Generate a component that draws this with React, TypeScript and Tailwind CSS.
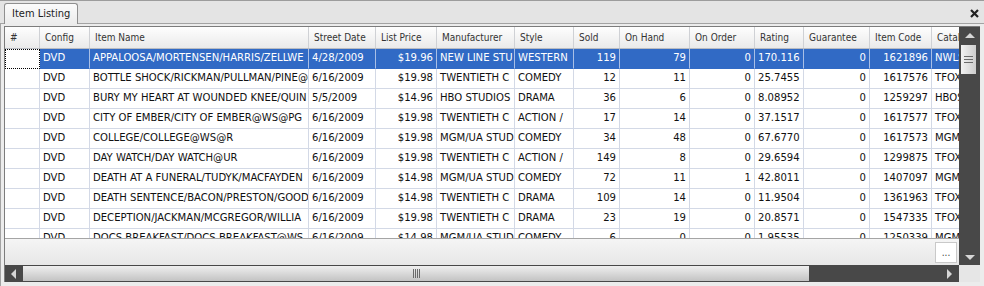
import React from 'react'

type Col = { title: string; w: number; right?: boolean }

const cols: Col[] = [
  { title: '#', w: 35 },
  { title: 'Config', w: 50 },
  { title: 'Item Name', w: 219 },
  { title: 'Street Date', w: 67 },
  { title: 'List Price', w: 61, right: true },
  { title: 'Manufacturer', w: 78 },
  { title: 'Style', w: 59 },
  { title: 'Sold', w: 46, right: true },
  { title: 'On Hand', w: 70, right: true },
  { title: 'On Order', w: 65, right: true },
  { title: 'Rating', w: 49 },
  { title: 'Guarantee', w: 66, right: true },
  { title: 'Item Code', w: 62, right: true },
  { title: 'Catalog', w: 60 },
]

// text is already cut the way the grid shows it
const rows: string[][] = [
  ['', 'DVD', 'APPALOOSA/MORTENSEN/HARRIS/ZELLWE', '4/28/2009', '$19.96', 'NEW LINE STU', 'WESTERN', '119', '79', '0', '170.116', '0', '1621896', 'NWLS'],
  ['', 'DVD', 'BOTTLE SHOCK/RICKMAN/PULLMAN/PINE@', '6/16/2009', '$19.98', 'TWENTIETH C', 'COMEDY', '12', '11', '0', '25.7455', '0', '1617576', 'TFOX'],
  ['', 'DVD', 'BURY MY HEART AT WOUNDED KNEE/QUIN', '5/5/2009', '$14.96', 'HBO STUDIOS', 'DRAMA', '36', '6', '0', '8.08952', '0', '1259297', 'HBOS'],
  ['', 'DVD', 'CITY OF EMBER/CITY OF EMBER@WS@PG', '6/16/2009', '$19.98', 'TWENTIETH C', 'ACTION /', '17', '14', '0', '37.1517', '0', '1617577', 'TFOX'],
  ['', 'DVD', 'COLLEGE/COLLEGE@WS@R', '6/16/2009', '$19.98', 'MGM/UA STUD', 'COMEDY', '34', '48', '0', '67.6770', '0', '1617573', 'MGM'],
  ['', 'DVD', 'DAY WATCH/DAY WATCH@UR', '6/16/2009', '$19.98', 'TWENTIETH C', 'ACTION /', '149', '8', '0', '29.6594', '0', '1299875', 'TFOX'],
  ['', 'DVD', 'DEATH AT A FUNERAL/TUDYK/MACFAYDEN', '6/16/2009', '$14.98', 'MGM/UA STUD', 'COMEDY', '72', '11', '1', '42.8011', '0', '1407097', 'MGM'],
  ['', 'DVD', 'DEATH SENTENCE/BACON/PRESTON/GOOD', '6/16/2009', '$14.98', 'TWENTIETH C', 'DRAMA', '109', '14', '0', '11.9504', '0', '1361963', 'TFOX'],
  ['', 'DVD', 'DECEPTION/JACKMAN/MCGREGOR/WILLIA', '6/16/2009', '$19.98', 'TWENTIETH C', 'DRAMA', '23', '19', '0', '20.8571', '0', '1547335', 'TFOX'],
  ['', 'DVD', 'DOCS BREAKFAST/DOCS BREAKFAST@WS', '6/16/2009', '$14.98', 'MGM/UA STUD', 'COMEDY', '6', '0', '0', '1.95535', '0', '1250339', 'MGM'],
]

const font = { fontFamily: '"DejaVu Sans Condensed", "DejaVu Sans", sans-serif', fontStretch: 'condensed' }

const HeaderRow = () => (
  <div className="flex h-[22px] shrink-0 border-b border-[#b9bcc2]">
    {cols.map((c) => (
      <div
        key={c.title}
        style={{ width: c.w }}
        className="shrink-0 flex items-center pl-[5px] overflow-hidden whitespace-nowrap border-r border-[#cfd1d5] bg-linear-to-b from-[#fefefe] to-[#eaeaea] text-[10px] text-[#333]"
      >
        {c.title}
      </div>
    ))}
  </div>
)

const DataRow = ({ row, selected }: { row: string[]; selected: boolean }) => (
  <div className="flex h-[20px] shrink-0">
    {cols.map((c, i) => {
      if (i === 0) {
        return (
          <div
            key={i}
            style={{ width: c.w }}
            className={
              selected
                ? 'shrink-0 bg-white border border-dotted border-black'
                : 'shrink-0 bg-white border-r border-b border-[#d3d9e6]'
            }
          />
        )
      }
      return (
        <div
          key={i}
          style={{ width: c.w }}
          className={
            'shrink-0 flex items-center overflow-hidden whitespace-nowrap px-[3px] text-[11.2px] border-r border-b ' +
            (c.right ? 'justify-end ' : '') +
            (selected
              ? 'bg-[#316ac5] text-white border-r-[#a9bfe6] border-b-[#316ac5]'
              : 'bg-white text-[#111] border-[#d3d9e6]')
          }
        >
          {row[i]}
        </div>
      )
    })}
  </div>
)

const Arrow = ({ dir }: { dir: 'up' | 'down' | 'left' | 'right' }) => {
  const pts = {
    up: '0,6 5,1 10,6',
    down: '0,1 5,6 10,1',
    left: '6,0 1,5 6,10',
    right: '1,0 6,5 1,10',
  }[dir]
  const vert = dir === 'up' || dir === 'down'
  return (
    <svg width={vert ? 10 : 7} height={vert ? 7 : 10} viewBox={vert ? '0 0 10 7' : '0 0 7 10'}>
      <polygon points={pts} fill="#d6d6d6" />
    </svg>
  )
}

export default function App() {
  return (
    <div className="w-[984px] h-[286px] bg-[#ececec] flex flex-col overflow-hidden select-none" style={font}>
      {/* tab strip */}
      <div className="h-[24px] shrink-0 flex items-end bg-[#e4e4e4] border-t border-[#9c9c9c] border-b border-b-[#a3a3a3] pl-[4px] pr-[5px]">
        <div className="h-[21px] -mb-px px-[7px] flex items-center rounded-t-[3px] border border-b-0 border-[#8f8f8f] bg-linear-to-b from-[#fbfbfb] to-[#ececec] text-[11px] text-[#222]">
          Item Listing
        </div>
        <div className="ml-auto self-center mt-[2px]">
          <svg width="9" height="9" viewBox="0 0 9 9">
            <path d="M1 1 L8 8 M8 1 L1 8" stroke="#222" strokeWidth="2.2" />
          </svg>
        </div>
      </div>

      {/* body */}
      <div className="flex-1 flex flex-col border-l border-[#a3a3a3] pl-[3px] pt-[2px] pr-[4px]">
        <div className="flex h-[239px] shrink-0 border-l border-t border-[#7c7c7c]">
          {/* grid area */}
          <div className="w-[954px] shrink-0 flex flex-col">
            <div className="overflow-hidden flex flex-col h-[211px] bg-white">
              <HeaderRow />
              {rows.map((r, i) => (
                <DataRow key={i} row={r} selected={i === 0} />
              ))}
            </div>
            <div className="flex-1 border-t border-[#a5a5a5] bg-linear-to-b from-[#f5f5f5] to-[#e7e7e7] flex justify-end items-start pt-[3px] pr-[2px]">
              <div className="w-[22px] h-[21px] bg-white border border-[#c9c9c9] flex items-end justify-center pb-[4px] text-[10px] leading-none text-[#444]">
                ...
              </div>
            </div>
          </div>
          {/* vertical scrollbar */}
          <div className="w-[21px] shrink-0 bg-[#484848] flex flex-col items-center">
            <div className="h-[17px] w-full flex items-center justify-center pl-[1px] pb-[1px]">
              <Arrow dir="up" />
            </div>
            <div className="w-[15px] h-[29px] mt-px mr-[3px] bg-linear-to-r from-[#f2f2f2] to-[#cdcdcd] flex flex-col items-center justify-center gap-[2px]">
              <div className="w-[9px] h-px bg-[#6a6a6a]" />
              <div className="w-[9px] h-px bg-[#6a6a6a]" />
              <div className="w-[9px] h-px bg-[#6a6a6a]" />
            </div>
            <div className="mt-auto h-[15px] w-full flex items-center justify-center pl-[1px]">
              <Arrow dir="down" />
            </div>
          </div>
        </div>

        {/* horizontal scrollbar row */}
        <div className="flex h-[17px] shrink-0 border-l border-[#7c7c7c]">
          <div className="w-[954px] shrink-0 bg-[#484848] flex py-px">
            <div className="w-[17px] shrink-0 flex items-center justify-center">
              <Arrow dir="left" />
            </div>
            <div className="w-[786px] shrink-0 ml-px bg-linear-to-b from-[#efefef] to-[#c3c3c3] flex items-center justify-center">
              <div className="flex gap-[1px]">
                <div className="w-px h-[9px] bg-[#6a6a6a]" />
                <div className="w-px h-[9px] bg-[#6a6a6a]" />
                <div className="w-px h-[9px] bg-[#6a6a6a]" />
                <div className="w-px h-[9px] bg-[#6a6a6a]" />
              </div>
            </div>
            <div className="flex-1 flex items-center justify-end pr-[6px]">
              <Arrow dir="right" />
            </div>
          </div>
          <div className="flex-1 bg-[#e6e6e6]" />
        </div>
      </div>
    </div>
  )
}
